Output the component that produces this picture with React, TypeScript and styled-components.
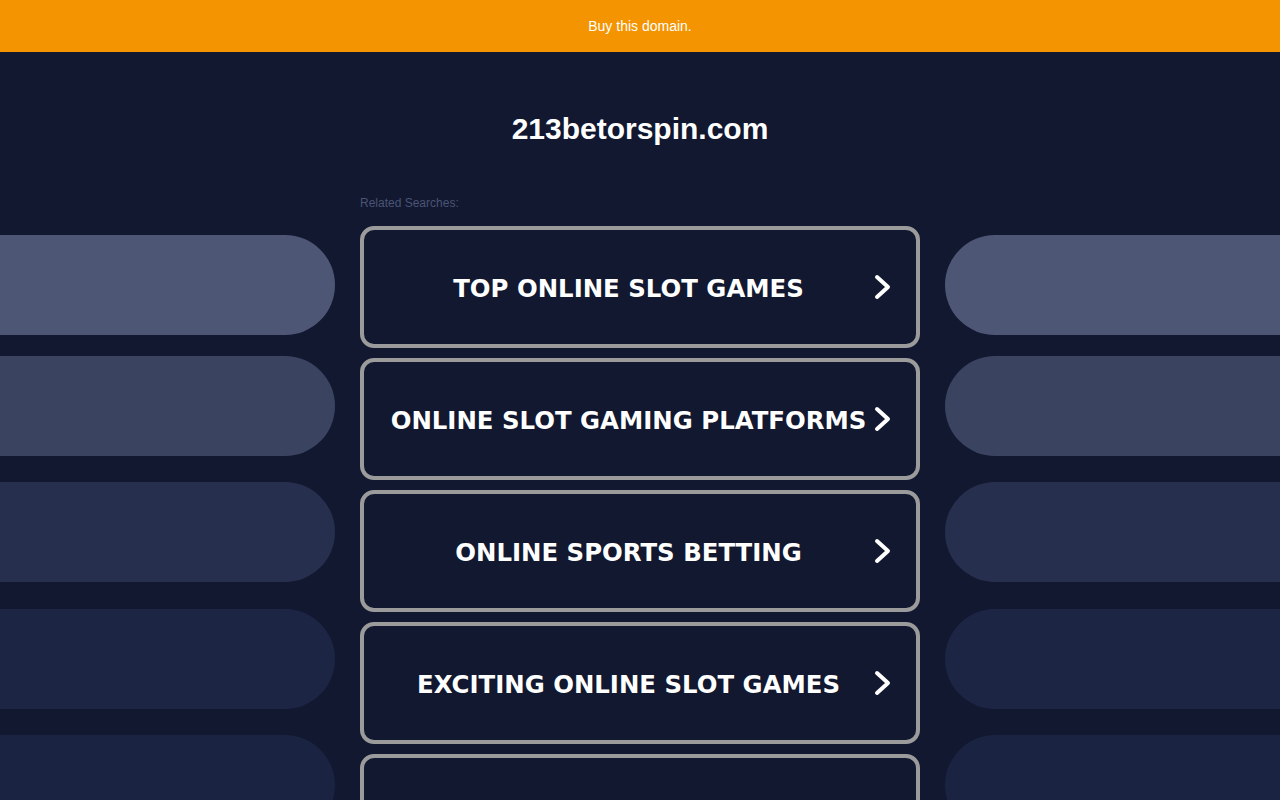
import React from "react";
import styled, { createGlobalStyle } from "styled-components";

const GlobalStyle = createGlobalStyle`
  html, body {
    margin: 0;
    padding: 0;
    overflow: hidden;
    background: #111830;
  }
  body {
    font-family: "Liberation Sans", Arial, sans-serif;
  }
`;

const Page = styled.div`
  min-height: 800px;
  background: #111830;
`;

const TopBar = styled.div`
  height: 52px;
  background: #f39400;
  display: flex;
  align-items: center;
  justify-content: center;
  color: #ffffff;
  font-size: 14px;
`;

const Title = styled.h1`
  margin: 0;
  padding-top: 59px;
  height: 36px;
  line-height: 36px;
  text-align: center;
  color: #ffffff;
  font-size: 30px;
  font-weight: bold;
  font-family: "Liberation Sans", Arial, sans-serif;
`;

const Main = styled.div`
  margin-top: 43px;
  display: grid;
  grid-template-columns: 335px 560px 335px;
  column-gap: 25px;
`;

const PillColumn = styled.div<{ $side: "left" | "right" }>`
  display: flex;
  flex-direction: column;
  padding-top: 45px;
  align-items: ${(p) => (p.$side === "left" ? "flex-end" : "flex-start")};
`;

const Pill = styled.div<{ $side: "left" | "right"; $color: string; $gap: number }>`
  width: 100%;
  height: 100px;
  margin-top: ${(p) => p.$gap}px;
  background: ${(p) => p.$color};
  border-radius: ${(p) => (p.$side === "left" ? "0 50px 50px 0" : "50px 0 0 50px")};
`;

const Center = styled.div`
  display: flex;
  flex-direction: column;
`;

const RelatedLabel = styled.div`
  margin-top: 6px;
  margin-bottom: 16px;
  font-size: 12px;
  line-height: 14px;
  color: #4b5474;
`;

const LinkList = styled.div`
  display: flex;
  flex-direction: column;
  gap: 10px;
`;

const LinkBox = styled.a`
  box-sizing: border-box;
  height: 122px;
  border: 4px solid #9b9b9b;
  border-radius: 14px;
  display: flex;
  align-items: center;
  padding: 2px 23px 0 20px;
  text-decoration: none;
  color: #ffffff;
  cursor: pointer;
`;

const LinkText = styled.span`
  flex: 1;
  text-align: center;
  white-space: nowrap;
  font-family: "DejaVu Sans", Verdana, sans-serif;
  font-weight: bold;
  font-size: 24.4px;
`;

const ChevronIcon = styled.svg`
  flex: none;
  margin-top: -2px;
`;

const Chevron = () => (
  <ChevronIcon width="20" height="26" viewBox="0 0 20 26">
    <polyline
      points="4,3 15,13 4,23"
      fill="none"
      stroke="#ffffff"
      strokeWidth="4"
      strokeLinecap="round"
      strokeLinejoin="round"
    />
  </ChevronIcon>
);

const pills = [
  { color: "#4d5674", gap: 0 },
  { color: "#3a4461", gap: 21 },
  { color: "#262f4e", gap: 26 },
  { color: "#1d2545", gap: 27 },
  { color: "#1b2343", gap: 26 },
];

const links = [
  "TOP ONLINE SLOT GAMES",
  "ONLINE SLOT GAMING PLATFORMS",
  "ONLINE SPORTS BETTING",
  "EXCITING ONLINE SLOT GAMES",
  "BEST ONLINE CASINO GAMES",
];

export default function App() {
  return (
    <Page>
      <GlobalStyle />
      <TopBar>Buy this domain.</TopBar>
      <Title>213betorspin.com</Title>
      <Main>
        <PillColumn $side="left">
          {pills.map((p, i) => (
            <Pill key={i} $side="left" $color={p.color} $gap={p.gap} />
          ))}
        </PillColumn>
        <Center>
          <RelatedLabel>Related Searches:</RelatedLabel>
          <LinkList>
            {links.map((l) => (
              <LinkBox key={l}>
                <LinkText>{l}</LinkText>
                <Chevron />
              </LinkBox>
            ))}
          </LinkList>
        </Center>
        <PillColumn $side="right">
          {pills.map((p, i) => (
            <Pill key={i} $side="right" $color={p.color} $gap={p.gap} />
          ))}
        </PillColumn>
      </Main>
    </Page>
  );
}
